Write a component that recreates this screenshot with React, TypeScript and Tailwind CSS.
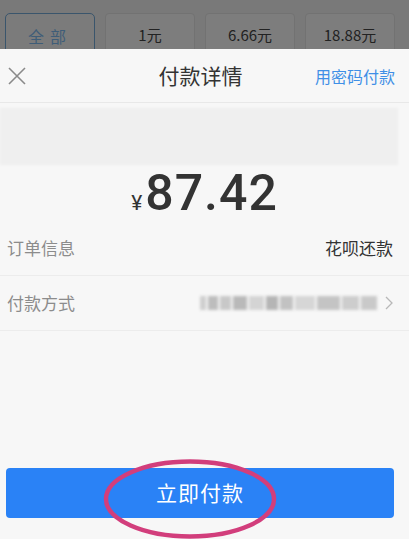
import React from "react"

const font = { fontFamily: '"Noto Sans CJK SC", Roboto, sans-serif' }

const amounts = ["1元", "6.66元", "18.88元"]

const App = () => {
  return (
    <div className="w-[409px] h-[539px] overflow-hidden bg-[#f7f7f7] relative" style={font}>
      {/* dimmed page behind the sheet */}
      <div className="h-[49px] overflow-hidden bg-[#797979] flex flex-row gap-[10px] px-[5px] pt-[13px]">
        <div className="w-[90px] h-[44px] shrink-0 rounded-[5px] border-[1.5px] border-[#3a556c] bg-[#7b7b7b] flex justify-center pt-[10px] text-[16px] tracking-[6px] text-[#3f5d78]">
          全部
        </div>
        {amounts.map((a) => (
          <div
            key={a}
            className="w-[90px] h-[44px] shrink-0 rounded-[4px] border border-[#727272] bg-[#7d7d7d] flex justify-center pt-[10px] text-[15px] text-[#222]"
          >
            {a}
          </div>
        ))}
      </div>

      {/* sheet */}
      <div className="bg-[#f7f7f7]">
        <div className="h-[54px] flex flex-row items-center justify-between border-b border-[#e8e8e8] pl-[8px] pr-[14px]">
          <svg width="18" height="18" viewBox="0 0 18 18" className="mt-[1px]">
            <path d="M1 1 L17 17 M17 1 L1 17" stroke="#8a8a8a" strokeWidth="1.6" fill="none" />
          </svg>
          <span className="text-[21px] text-[#333] ml-[60px]">付款详情</span>
          <span className="text-[16px] text-[#3f8fe6]">用密码付款</span>
        </div>

        <div className="mt-[5px] mr-[11px] h-[57px] bg-[#efefef] blur-[1px]" />

        <div className="h-[52px] flex flex-row items-end justify-center leading-none text-[#333] mt-[1px]">
          <span className="text-[21px] mb-[4px] mr-[3px]" style={{ fontFamily: "Roboto, sans-serif" }}>¥</span>
          <span className="text-[50px] font-medium tracking-[1px]" style={{ fontFamily: "Roboto, sans-serif" }}>87.42</span>
        </div>

        <div className="mt-[3px] h-[55px] flex flex-row items-center justify-between border-b border-[#ececec] pl-[7px] pr-[16px]">
          <span className="text-[17px] text-[#8c8c8c]">订单信息</span>
          <span className="text-[17px] text-[#333]">花呗还款</span>
        </div>

        <div className="h-[55px] flex flex-row items-center justify-between border-b border-[#ececec] pl-[7px] pr-[16px]">
          <span className="text-[17px] text-[#8c8c8c]">付款方式</span>
          <div className="flex flex-row items-center">
            <div className="w-[177px] h-[14px] flex flex-row gap-[2px] blur-[1.5px] mr-[8px]">
              <div className="w-[6px] bg-[#cfcfcf]" />
              <div className="w-[10px] bg-[#bdbdbd]" />
              <div className="w-[12px] bg-[#c8c8c8]" />
              <div className="w-[14px] bg-[#b9b9b9]" />
              <div className="w-[16px] bg-[#d4d4d4]" />
              <div className="w-[12px] bg-[#b5b5b5]" />
              <div className="w-[14px] bg-[#c2c2c2]" />
              <div className="w-[20px] bg-[#d6d6d6]" />
              <div className="w-[24px] bg-[#c4c4c4]" />
              <div className="w-[18px] bg-[#cdcdcd]" />
              <div className="w-[16px] bg-[#c9c9c9]" />
            </div>
            <svg width="8" height="14" viewBox="0 0 8 14">
              <path d="M1 1 L7 7 L1 13" stroke="#b8b8b8" strokeWidth="1.3" fill="none" />
            </svg>
          </div>
        </div>

        <div className="px-[6px] mt-[137px] pr-[15px]">
          <div className="relative h-[50px] rounded-[4px] bg-[#2a82f6] flex items-center justify-center text-[21px] text-white tracking-[1px]">
            立即付款
            <svg
              width="180"
              height="86"
              viewBox="0 0 180 86"
              className="absolute left-[94px] top-[-12px] pointer-events-none"
            >
              <ellipse cx="90" cy="43" rx="84" ry="37.5" stroke="#d23e7c" strokeWidth="4.5" fill="none" />
            </svg>
          </div>
        </div>
      </div>
    </div>
  )
}

export default App
